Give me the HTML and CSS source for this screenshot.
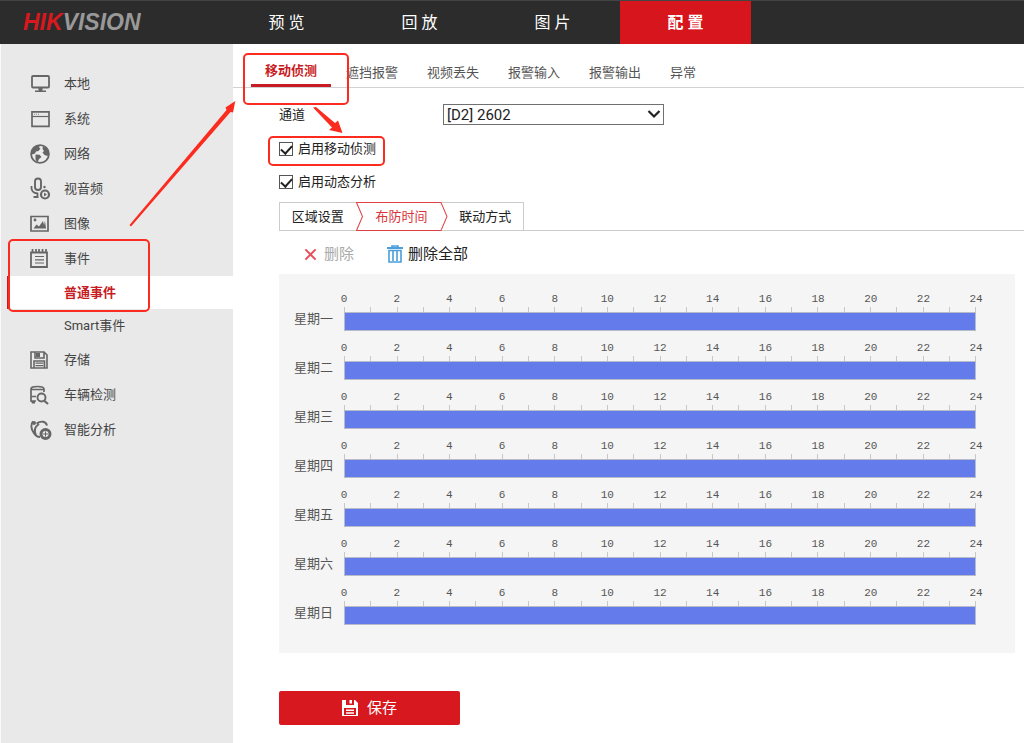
FILE: index.html
```html
<!DOCTYPE html>
<html lang="zh-CN">
<head>
<meta charset="utf-8">
<meta name="viewport" content="width=device-width, initial-scale=1">
<title>HIKVISION</title>
<link rel="stylesheet" href="styles.css">
</head>
<body>
<header class="topbar">
  <a class="logo" href="#"><span class="logo-red">HIK</span>VISION</a>
  <nav class="topnav">
    <a href="#">预 览</a>
    <a href="#">回 放</a>
    <a href="#">图 片</a>
    <a href="#" class="active">配 置</a>
  </nav>
</header>
<div class="layout">
  <nav class="sidebar">
    <a class="side-item" href="#"><svg class="icon" viewBox="0 0 20 20"><rect x="2" y="2" width="17" height="11.500" rx="1" fill="none" stroke="#666" stroke-width="1.800"/><path d="M8.500 14h4v2.500H16V18H5v-1.500h3.500z" fill="#666"/></svg>本地</a>
    <a class="side-item" href="#"><svg class="icon" viewBox="0 0 20 20"><path d="M2 2.800h17v14.500H2z" fill="none" stroke="#666" stroke-width="1.700"/><path d="M2 7.500h17" stroke="#666" stroke-width="1.200"/><path d="M4 5.200h6" stroke="#888" stroke-dasharray="1 1"/></svg>系统</a>
    <a class="side-item" href="#"><svg class="icon" viewBox="0 0 20 20"><circle cx="10" cy="10" r="8.900" fill="#ececec" stroke="#666" stroke-width="1.800"/><path d="M1.500 9 3 4l4-3 3 .2-1 2.300 1.500 1-2 2.500-2.500.5L5 9.500l-3 1zM5.500 10.500l4 .2 2 2.300-2.500 2-1.500 3.500-2-3zM13 2l4 2.500 2 5-1.500 2.500-3-1-2-2.500 1.500-1.500-1.500-2z" fill="#666"/></svg>网络</a>
    <a class="side-item" href="#"><svg class="icon" viewBox="0 0 20 20"><rect x="5" y="-.5" width="6" height="11.500" rx="3" fill="none" stroke="#666" stroke-width="1.900"/><path d="M1.500 7v2c0 3 2 5 6 5.500V18M3.500 18h5" fill="none" stroke="#666" stroke-width="1.800"/><circle cx="14.500" cy="8" r="1.200" fill="#666"/><circle cx="15" cy="15.500" r="4" fill="#ececec" stroke="#666" stroke-width="2.200"/><path d="m14 13.500 3 2-3 2z" fill="#666"/></svg>视音频</a>
    <a class="side-item" href="#"><svg class="icon" viewBox="0 0 20 20"><path d="M1 2.500h17v14.500H1z" fill="none" stroke="#666" stroke-width="1.700"/><circle cx="5" cy="6" r="1.400" fill="#666"/><path d="m3.500 14.500 3-4 2.500 2L13 7l1 4 1-4 1 7.500z" fill="#666"/></svg>图像</a>
    <a class="side-item" href="#"><svg class="icon" viewBox="0 0 20 20"><path d="M1 3.500h16V18H1z" fill="none" stroke="#666" stroke-width="1.800"/><path d="M2.500 0v4M6 0v4M9 0v4M12.500 0v4M16 0v4" stroke="#666" stroke-width="1.700"/><path d="M5 7.500h9M5 10.800h9M5 14h9" stroke="#666" stroke-width="1.200"/></svg>事件</a>
    <a class="side-item sub active" href="#">普通事件</a>
    <a class="side-item sub" href="#">Smart事件</a>
    <a class="side-item" href="#"><svg class="icon" viewBox="0 0 20 20"><path d="M1 2h13l3 3v13H1zM5 2v6h9V2M4 18v-7h10.500v7" fill="none" stroke="#666" stroke-width="1.600"/><path d="M6 3h4v4H6zM5.500 12.500h8v1.200h-8zm0 2.500h8v1.200h-8z" fill="#666"/></svg>存储</a>
    <a class="side-item" href="#"><svg class="icon" viewBox="0 0 20 20"><path d="M6 16H1V4q0-2.500 6.500-2.500T14 4v3M1 4.500h13M1 11.500h5" fill="none" stroke="#666" stroke-width="1.700"/><path d="M1 16h4v2.500H2z" fill="#666"/><circle cx="11.500" cy="12.500" r="4" fill="none" stroke="#666" stroke-width="1.900"/><path d="m14 15.500 4 3.500" stroke="#666" stroke-width="2.200"/></svg>车辆检测</a>
    <a class="side-item" href="#"><svg class="icon" viewBox="0 0 20 20"><path d="M3 1.500C.5 4 1 9 3.500 12.500 5.500 16 8 17 10 17M9 4C4.500 7 4 11 6 15M6.500 3.500C11 .5 16 1 17 5.500" fill="none" stroke="#666" stroke-width="1.900"/><circle cx="4" cy="3" r="2" fill="#666"/><circle cx="15.500" cy="14" r="4.500" fill="#ececec" stroke="#666" stroke-width="3"/><path d="M15.500 11.500v5M13 14h5" stroke="#666" stroke-width="1"/></svg>智能分析</a>
  </nav>
  <main class="main">
    <nav class="tabs">
      <a href="#" class="active">移动侦测</a>
      <a href="#">遮挡报警</a>
      <a href="#">视频丢失</a>
      <a href="#">报警输入</a>
      <a href="#">报警输出</a>
      <a href="#">异常</a>
    </nav>
    <form class="settings">
      <div class="field">
        <label for="channel">通道</label>
        <span class="select-wrap">
          <select id="channel"><option>[D2] 2602</option></select>
          <svg class="caret" viewBox="0 0 14 10"><path d="m1.500 2 5.500 5.500L12.500 2" fill="none" stroke="#222" stroke-width="2.200"/></svg>
        </span>
      </div>
      <label class="check"><input type="checkbox" checked>启用移动侦测</label>
      <label class="check"><input type="checkbox" checked>启用动态分析</label>
      <div class="steps-row">
        <div class="steps">
          <button type="button">区域设置</button>
          <button type="button" class="active"><svg class="step-shape" viewBox="0 0 92 28" preserveAspectRatio="none"><path d="M.5.500H85L91 14l-6 13.500H.5L6.500 14z" fill="none" stroke="#e04046"/></svg>布防时间</button>
          <button type="button">联动方式</button>
        </div>
      </div>
      <div class="tools">
        <button type="button" class="muted"><svg class="tool-icon cross" viewBox="0 0 14 14"><path d="m1.500 1.500 11 11m0-11-11 11" stroke="#e8505b" stroke-width="2.200"/></svg>删除</button>
        <button type="button"><svg class="tool-icon trash" viewBox="0 0 16 18"><path d="M0 3h16" stroke="#4a9fdc" stroke-width="2"/><path d="M5 2V1h6v1M2 5.500h12V17H2zM6 6v10M10 6v10" fill="none" stroke="#4a9fdc" stroke-width="1.600"/></svg>删除全部</button>
      </div>
      <section class="schedule" id="schedule"></section>
      <button type="button" class="save"><svg class="save-icon" viewBox="0 0 16 16"><path fill="#fff" fill-rule="evenodd" d="M0 0h13l3 3v13H0zM4 0v5h8V0zM2 8v7h12V8z"/><path d="M7.500 0H10v3.500H7.500zM4 9.500h8V11H4zm0 2.700h8v1.500H4z" fill="#fff"/></svg>保存</button>
    </form>
  </main>
</div>
<svg class="notes" width="400" height="330" viewBox="0 0 400 330" aria-hidden="true">
  <g fill="none" stroke="#fb2c1f" stroke-width="2">
    <rect x="244" y="54" width="104" height="50" rx="4"/>
    <rect x="269" y="137" width="115" height="28" rx="4"/>
    <rect x="9" y="240" width="140" height="71" rx="4"/>
  </g>
  <path d="m129.500 225 97-115-1-2.500 9.800-6.500-2.300 11.500-2.500-.5-99.500 114.500zM313 107.500l3-.5 19 16 3-2.500 4.500 12.500-13.500-3 3-2.500z" fill="#fb2c1f"/>
</svg>
<script src="schedule.js"></script>
</body>
</html>
```
FILE: styles.css
```css
* {
  box-sizing: border-box;
}

body {
  margin: 0;
  min-height: 100vh;
  display: flex;
  flex-direction: column;
  position: relative;
  background: #fff;
  color: #222;
  font: 13px/20px Roboto, "Noto Sans CJK SC", sans-serif;
}

a {
  color: inherit;
  text-decoration: none;
}

button {
  padding: 0;
  border: 0;
  background: none;
  color: inherit;
  font: inherit;
}

.topbar {
  display: flex;
  height: 44px;
  background: #2c2c2c;
  border-top: 1px solid #444;
}

.logo {
  width: 221px;
  padding-left: 23px;
  color: #999;
  font: italic bold 23px/42px "Liberation Sans", Arial, sans-serif;
}

.logo-red {
  color: #d7181f;
}

.topnav {
  display: flex;
  gap: 2px;
}

.topnav a {
  width: 131px;
  color: #fff;
  font-size: 16px;
  line-height: 44px;
  text-align: center;
}

.topnav .active {
  height: 43px;
  background: #d7151c;
  font-weight: bold;
}

.layout {
  flex: 1;
  display: flex;
}

.sidebar {
  width: 233px;
  flex: none;
  padding-top: 22px;
  background: #e9e9e9;
  border-left: 1px solid #fafafa;
  color: #444;
}

.side-item {
  display: flex;
  align-items: center;
  gap: 14px;
  height: 35px;
  padding-left: 29px;
}

.side-item.sub {
  height: 33px;
  padding-left: 63px;
}

.side-item.active {
  margin-left: 6px;
  padding-left: 55px;
  border-left: 2px solid #c81c24;
  background: #fff;
  color: #c81c24;
  font-weight: bold;
}

.icon {
  width: 20px;
  height: 20px;
  overflow: visible;
}

.main {
  flex: 1;
  min-width: 0;
}

.tabs {
  display: flex;
  gap: 1px;
  height: 44px;
  padding: 17px 0 0 18px;
  border-bottom: 1px solid #d2d2d2;
  color: #555;
}

.tabs a {
  height: 26px;
  padding: 2px 14px 0;
}

.tabs .active {
  padding-top: 0;
  border-bottom: 3px solid #c81c24;
  color: #c81c24;
  font-weight: bold;
}

.settings {
  padding: 16px 0 18px 46px;
}

.field {
  display: flex;
  align-items: center;
}

.field label {
  width: 164px;
}

.select-wrap {
  position: relative;
  width: 221px;
}

.select-wrap select {
  display: block;
  width: 100%;
  height: 21px;
  padding: 0 3px;
  border: 1px solid #707070;
  border-radius: 0;
  background: #fff;
  color: #222;
  font: 15px/18px Roboto, sans-serif;
  appearance: none;
}

.caret {
  position: absolute;
  top: 5px;
  right: 3px;
  width: 14px;
  height: 10px;
  pointer-events: none;
}

.check {
  display: flex;
  align-items: center;
  gap: 5px;
  width: max-content;
  margin-top: 13px;
}

.check input {
  display: grid;
  place-items: center;
  width: 14px;
  height: 14px;
  margin: 0;
  border: 1px solid #555;
  background: #fff;
  appearance: none;
}

.check input:checked::before {
  content: "";
  width: 5px;
  height: 9px;
  margin-bottom: 3px;
  border: solid #222;
  border-width: 0 2px 2px 0;
  transform: rotate(42deg);
}

.field + .check {
  margin-top: 14px;
}

.steps-row {
  margin-top: 10px;
  border-bottom: 1px solid #ccc;
}

.steps {
  display: flex;
  width: 245px;
  height: 28px;
  border: 1px solid #ccc;
  border-bottom: 0;
}

.steps button {
  flex: 1;
}

.steps .active {
  position: relative;
  flex: 0 0 92px;
  color: #d9343a;
}

.step-shape {
  position: absolute;
  top: -1px;
  left: 0;
  width: 100%;
  height: 29px;
}

.tools {
  display: flex;
  gap: 33px;
  height: 43px;
  padding: 3px 0 0 25px;
  font-size: 15px;
}

.tools button {
  display: flex;
  align-items: center;
  gap: 5px;
}

.tools .muted {
  gap: 7px;
  color: #aaa;
}

.cross {
  width: 13px;
  height: 13px;
}

.trash {
  width: 16px;
  height: 18px;
}

.schedule {
  margin-right: 9px;
  padding: 18px 39px 18px 15px;
  background: #f5f5f5;
}

.day {
  display: flex;
  height: 49px;
  color: #555;
}

.day-name {
  width: 50px;
  flex: none;
  padding-top: 17px;
}

.track {
  flex: 1;
  min-width: 0;
}

.hours {
  display: flex;
  margin: 0 calc(-100% / 24);
  font: 11px/15px "Liberation Mono", monospace;
}

.hours span {
  flex: 1;
  text-align: center;
}

.ticks {
  display: flex;
  height: 5px;
  border-right: 1px solid #c8c8c8;
}

.ticks i {
  flex: 1;
  border-left: 1px solid #c8c8c8;
}

.bar {
  height: 19px;
  border: 1px solid #b8bcc8;
  background: #647ceb;
}

.save {
  display: flex;
  align-items: center;
  justify-content: center;
  gap: 9px;
  width: 181px;
  height: 34px;
  margin-top: 38px;
  border-radius: 2px;
  background: #d7181f;
  color: #fff;
  font-size: 15px;
}

.save-icon {
  width: 16px;
  height: 16px;
}

.notes {
  position: absolute;
  top: 0;
  left: 0;
  pointer-events: none;
}
```
FILE: schedule.js
```js
const days = ["星期一", "星期二", "星期三", "星期四", "星期五", "星期六", "星期日"];
const hours = Array.from({ length: 13 }, (_, i) => `<span>${i * 2}</span>`).join("");
const ticks = "<i></i>".repeat(24);

document.getElementById("schedule").innerHTML = days
  .map((day) => `
    <div class="day">
      <span class="day-name">${day}</span>
      <div class="track">
        <div class="hours">${hours}</div>
        <div class="ticks">${ticks}</div>
        <div class="bar"></div>
      </div>
    </div>`)
  .join("");
```
